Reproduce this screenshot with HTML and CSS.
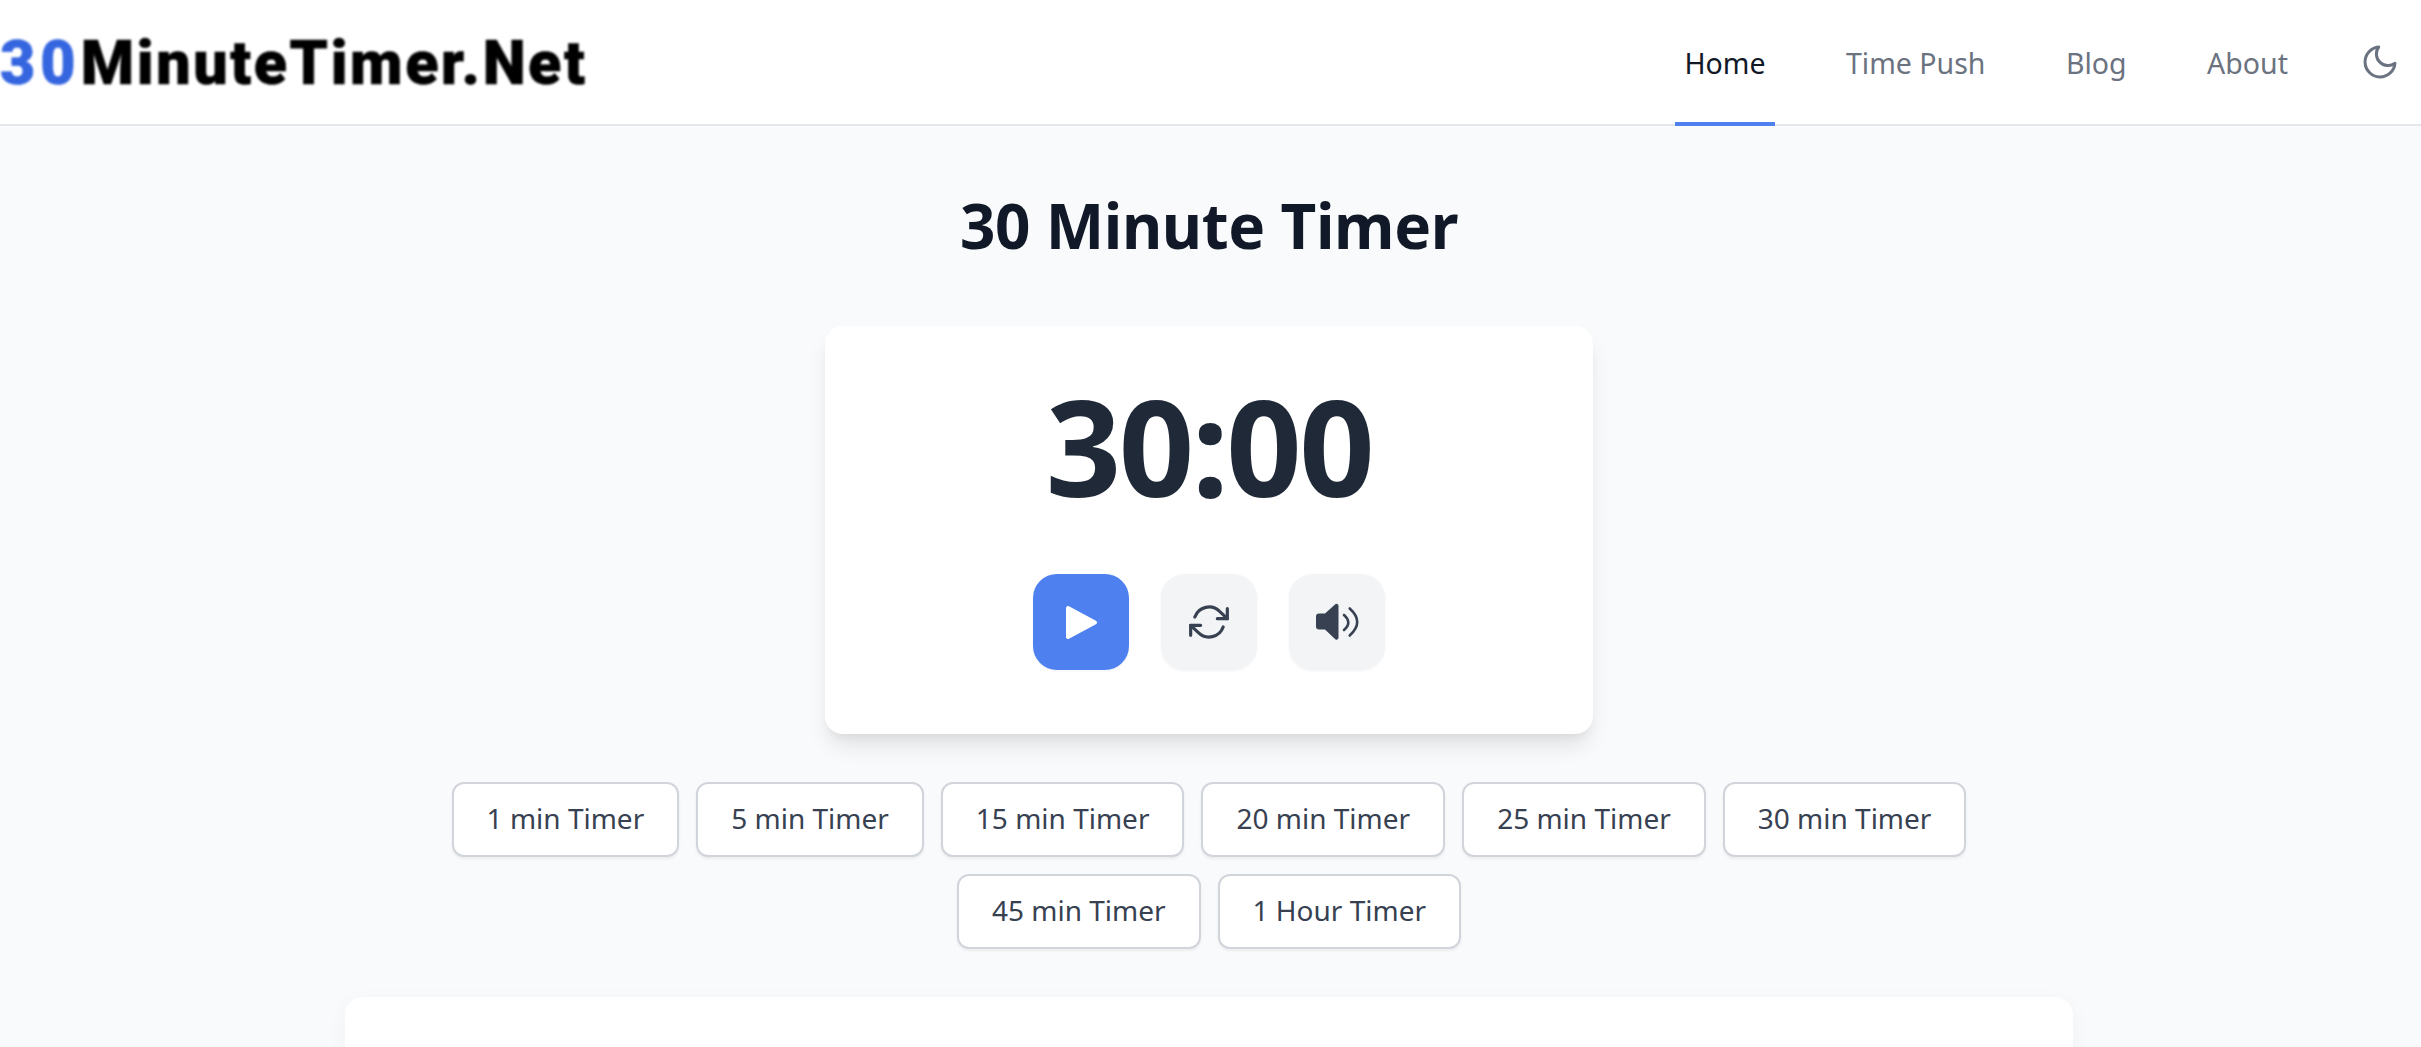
FILE: index.html
```html
<!doctype html>
<html lang="en">
    <head>
        <meta charset="UTF-8" />
        <meta name="viewport" content="width=device-width, initial-scale=1.0" />
        <title>30 Minute Timer</title>
        <link rel="stylesheet" href="styles.css">
    </head>
    <body>
        <header class="header">
            <a class="logo" href="#"><span class="logo-num">30</span>MinuteTimer.Net</a>
            <nav class="nav">
                <a class="nav-link active" href="#">Home</a>
                <a class="nav-link" href="#">Time Push</a>
                <a class="nav-link" href="#">Blog</a>
                <a class="nav-link" href="#">About</a>
            </nav>
            <button class="theme-toggle" aria-label="Dark mode">
                <svg viewBox="0 0 24 24" width="40" height="40" fill="none" stroke="currentColor" stroke-width="1.8" stroke-linecap="round" stroke-linejoin="round">
                    <path d="M21 12.79A9 9 0 1 1 11.21 3 7 7 0 0 0 21 12.79z" />
                </svg>
            </button>
        </header>

        <main class="main">
            <h1 class="title">30 Minute Timer</h1>

            <section class="timer-card">
                <div class="timer-display">30:00</div>
                <div class="controls">
                    <button class="ctrl-btn play" aria-label="Start">
                        <svg viewBox="0 0 42 42" width="42" height="42">
                            <path d="M8 7 L35 21.5 L8 36 Z" fill="#fff" stroke="#fff" stroke-width="4" stroke-linejoin="round" />
                        </svg>
                    </button>
                    <button class="ctrl-btn" aria-label="Reset">
                        <svg viewBox="0 0 24 24" width="40" height="40" fill="none" stroke="currentColor" stroke-width="1.9" stroke-linecap="round" stroke-linejoin="round">
                            <polyline points="23 4 23 10 17 10" />
                            <polyline points="1 20 1 14 7 14" />
                            <path d="M3.51 9a9 9 0 0 1 14.85-3.36L23 10M1 14l4.64 4.36A9 9 0 0 0 20.49 15" />
                        </svg>
                    </button>
                    <button class="ctrl-btn" aria-label="Sound">
                        <svg viewBox="0 0 44 42" width="44" height="42" fill="none" stroke="currentColor" stroke-width="2.6" stroke-linecap="round">
                            <path d="M20 3.5 L10 12.5 H4 a3 3 0 0 0 -3 3 v10 a3 3 0 0 0 3 3 H10 L20 38 a2 2 0 0 0 3.5 -1.5 V5 a2 2 0 0 0 -3.5 -1.5z" fill="currentColor" stroke="none" />
                            <path d="M29 14 q8.6 7.5 0 15" />
                            <path d="M34.7 7.5 q15 13.5 0 27" />
                        </svg>
                    </button>
                </div>
            </section>

            <div class="presets">
                <a class="preset" href="#">1 min Timer</a>
                <a class="preset" href="#">5 min Timer</a>
                <a class="preset" href="#">15 min Timer</a>
                <a class="preset" href="#">20 min Timer</a>
                <a class="preset" href="#">25 min Timer</a>
                <a class="preset" href="#">30 min Timer</a>
                <a class="preset" href="#">45 min Timer</a>
                <a class="preset" href="#">1 Hour Timer</a>
            </div>

            <section class="content-card"></section>
        </main>
    </body>
</html>
```

FILE: styles.css
```css
* {
    margin: 0;
    padding: 0;
    box-sizing: border-box;
}

html,
body {
    height: 100vh;
    overflow: hidden;
}

body {
    font-family: "Noto Sans", "Open Sans", Arial, sans-serif;
    background: #f9fafb;
    color: #1f2937;
}

a {
    text-decoration: none;
}

button {
    border: none;
    background: none;
    cursor: pointer;
    font: inherit;
}

.header {
    display: flex;
    align-items: center;
    height: 126px;
    padding-right: 21px;
    background: white;
    border-bottom: 2px solid #e5e7eb;
}

.logo {
    margin-right: auto;
    padding-top: 3px;
    font-family: Roboto, Arial, sans-serif;
    font-size: 61px;
    font-weight: 900;
    line-height: 1;
    letter-spacing: 2.6px;
    color: #000;
    -webkit-text-stroke: 0.6px currentColor;
    filter: blur(1px);
}

.logo-num {
    letter-spacing: 5px;
    color: #3566e0;
}

.nav {
    display: flex;
    align-self: stretch;
    gap: 62.5px;
    margin-right: 63px;
}

.nav-link {
    display: flex;
    align-items: center;
    padding: 4px 9px 0;
    margin-bottom: -2px;
    border-bottom: 4px solid transparent;
    font-size: 28.5px;
    color: #6b7280;
}

.nav-link.active {
    color: #111827;
    border-bottom-color: #4f80f0;
}

.theme-toggle {
    display: flex;
    color: #6b7280;
}

.main {
    display: flex;
    flex-direction: column;
    align-items: center;
    padding-top: 57px;
    padding-right: 3px;
}

.title {
    font-size: 62px;
    font-weight: 700;
    line-height: 84px;
    letter-spacing: -0.4px;
    color: #111827;
    margin-bottom: 59px;
}

.timer-card {
    display: flex;
    flex-direction: column;
    align-items: center;
    width: 768px;
    height: 408px;
    padding-top: 48px;
    background: white;
    border-radius: 18px;
    box-shadow: 0 15px 22px -4px rgba(0, 0, 0, 0.1), 0 6px 9px -3px rgba(0, 0, 0, 0.05);
}

.timer-display {
    font-size: 132px;
    font-weight: 700;
    line-height: 144px;
    letter-spacing: -2.5px;
    color: #1f2937;
    margin-bottom: 56px;
}

.controls {
    display: flex;
    gap: 32px;
}

.ctrl-btn {
    display: flex;
    align-items: center;
    justify-content: center;
    width: 96px;
    height: 96px;
    border-radius: 24px;
    background: #f3f4f6;
    color: #374151;
    box-shadow: 0 1px 3px rgba(0, 0, 0, 0.05);
}

.ctrl-btn.play {
    background: #4f80f0;
}

.presets {
    display: flex;
    flex-wrap: wrap;
    justify-content: center;
    gap: 17px;
    width: 1536px;
    margin-top: 48px;
}

.preset {
    display: flex;
    align-items: center;
    justify-content: center;
    height: 75px;
    padding: 0 33px 3px;
    background: white;
    border: 2px solid #d1d5db;
    border-radius: 12px;
    font-size: 28px;
    color: #374151;
    box-shadow: 0 2px 3px rgba(0, 0, 0, 0.06);
}

.content-card {
    width: 1728px;
    height: 400px;
    margin-top: 48px;
    background: white;
    border-radius: 18px;
    box-shadow: 0 6px 22px rgba(0, 0, 0, 0.04);
}
```
